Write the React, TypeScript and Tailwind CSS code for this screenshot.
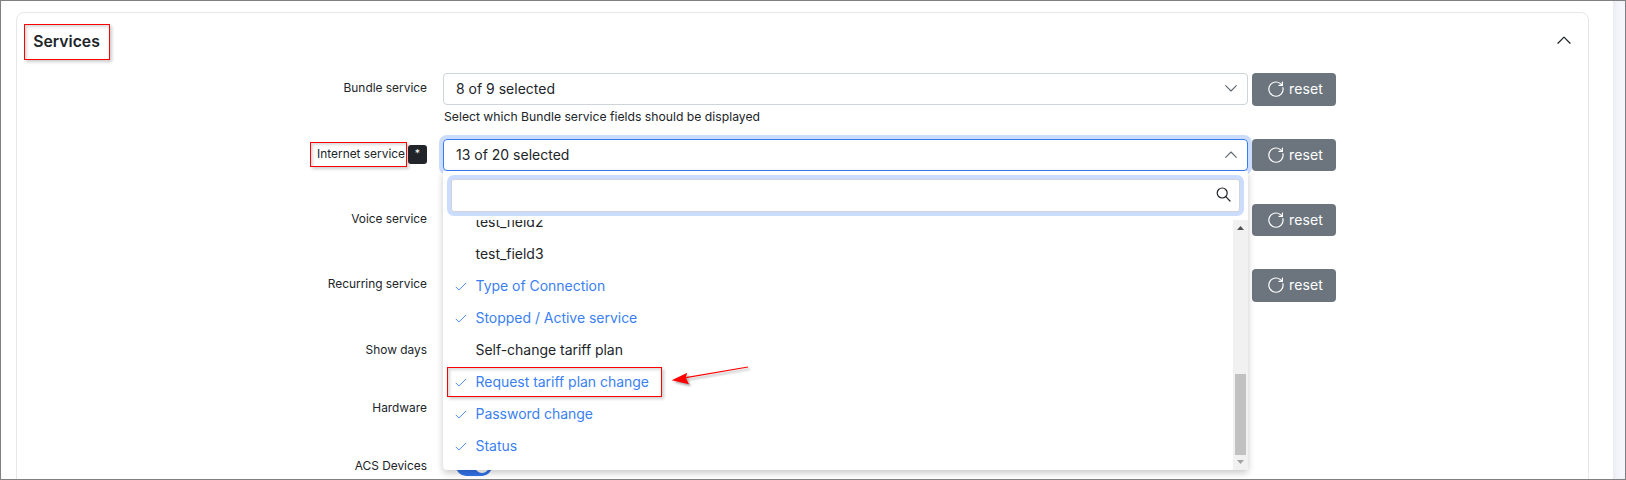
import React from "react";

type IconProps = { className?: string };

const Chevron = ({ className = "" }: IconProps) => (
  <svg viewBox="0 0 12 7" fill="none" stroke="currentColor" strokeLinecap="round" strokeLinejoin="round" className={className}>
    <path d="M0.7 0.7 6 6 11.3 0.7" strokeWidth="1.1" />
  </svg>
);

const ResetIcon = () => (
  <svg viewBox="0 0 16 16" fill="none" stroke="currentColor" strokeWidth="1.2" strokeLinecap="round" strokeLinejoin="round" className="size-4 shrink-0">
    <path d="M14.9 6.6A7.1 7.1 0 1 1 12.4 2.6L14.2 4.2" />
    <path d="M14.4 1v3.4H11" />
  </svg>
);

const Check = () => (
  <svg viewBox="0 0 12 9" fill="none" stroke="currentColor" strokeWidth="0.9" strokeLinecap="round" strokeLinejoin="round" className="mt-0.5 h-[9px] w-3">
    <path d="M1 5.1 3.9 8 11 1" />
  </svg>
);

const SearchIcon = () => (
  <svg viewBox="0 0 15 15" fill="none" stroke="currentColor" strokeWidth="1.2" strokeLinecap="round" className="mb-0.5 size-[15px]">
    <circle cx="6.2" cy="6" r="5" />
    <path d="M9.8 9.7 14 14" />
  </svg>
);

const ResetButton = ({ tall }: { tall?: boolean }) => (
  <button className={`ml-1 flex w-[84px] shrink-0 items-center rounded bg-[#6c757d] pl-4 text-[14px] text-white ${tall ? "h-[33px] pb-px" : "h-8"}`}>
    <ResetIcon />
    <span className="ml-[5px] pb-px tracking-[0.01em]">reset</span>
  </button>
);

const Row = ({ label, height, badge, children }: { label: string; height: string; badge?: boolean; children?: React.ReactNode }) => (
  <div className={`flex ${height}`}>
    <div className="mr-4 flex h-[30px] w-[410px] shrink-0 items-center justify-end text-[11.9px]">
      {badge ? (
        <>
          <span className="mt-px flex h-[25px] w-[97px] items-center justify-end border border-[#f00] pr-px pb-px shadow-[2px_2px_3px_rgba(0,0,0,0.2),inset_2px_2px_3px_rgba(0,0,0,0.15)]">{label}</span>
          <span className="mt-px ml-px flex h-[19px] w-[19px] justify-center rounded-[3px] bg-[#212529] pt-px text-[10.5px] text-white">*</span>
        </>
      ) : (
        label
      )}
    </div>
    {children}
  </div>
);

const options = [
  { name: "test_field2", on: false },
  { name: "test_field3", on: false },
  { name: "Type of Connection", on: true },
  { name: "Stopped / Active service", on: true },
  { name: "Self-change tariff plan", on: false },
  { name: "Request tariff plan change", on: true, marked: true },
  { name: "Password change", on: true },
  { name: "Status", on: true },
];

const Dropdown = () => (
  <div className="absolute top-8 left-0 z-10 flex h-[299px] w-[805px] flex-col rounded-b bg-white shadow-[0_3px_7px_rgba(0,0,0,0.22)]">
    <div className="mx-2 mt-2 flex h-[33px] shrink-0 items-center justify-end rounded-[3px] border border-[#ced4da] bg-white pr-2 shadow-[0_0_0_4px_#cbdcfc]">
      <SearchIcon />
    </div>
    <div className="mt-2 flex h-[250px] overflow-hidden">
      <div className="-mt-[14px] flex-1">
        {options.map((o) => (
          <div key={o.name} className={`relative flex h-8 items-center pb-px pl-3 text-[14px] leading-[21px] tracking-[-0.002em] ${o.on ? "text-[#3b7ff2]" : "text-[#212529]"}`}>
            <span className="w-[20.5px]">{o.on && <Check />}</span>
            <span>{o.name}</span>
            {o.marked && (
              <>
                <span className="absolute top-px left-1 h-[30px] w-[215px] border border-[#f00] shadow-[2px_2px_3px_rgba(0,0,0,0.2),inset_2px_2px_3px_rgba(0,0,0,0.15)]" />
                <svg viewBox="0 0 84 24" className="absolute -top-0.5 left-[226px] h-6 w-[84px] drop-shadow-[2px_2px_1px_rgba(0,0,0,0.35)]">
                  <path d="M14 14.2 79 3" stroke="#f00" strokeWidth="1.2" />
                  <path d="M2.7 16.3 18.3 8.7 16.7 13.8 20 20.3Z" fill="#f00" />
                </svg>
              </>
            )}
          </div>
        ))}
      </div>
      <div className="flex w-[15px] flex-col items-center bg-[#f1f1f1]">
        <svg viewBox="0 0 15 15" className="size-[15px]"><path d="M4 10 7.5 6 11 10Z" fill="#505050" /></svg>
        <div className="mt-[139px] h-[81px] w-[11px] bg-[#c1c1c1]" />
        <svg viewBox="0 0 15 15" className="size-[15px]"><path d="M4 5 7.5 9 11 5Z" fill="#a3a3a3" /></svg>
      </div>
    </div>
  </div>
);

export default function App() {
  return (
    <div className="flex h-[480px] w-[1626px] overflow-hidden border border-[#808080] bg-white font-['Inter',sans-serif] text-[#212529]">
      <main className="w-[1612px] shrink-0 pt-[11px] pl-[15px]">
        <section className="h-[520px] w-[1573px] rounded-lg border border-[#e5e7eb]">
          <header className="flex h-[60px] items-start justify-between pt-[11px] pr-[17px] pl-[7px]">
            <h2 className="flex h-9 w-[86px] items-center justify-center border border-[#f00] pr-px text-[15.75px] font-semibold shadow-[2px_2px_3px_rgba(0,0,0,0.2),inset_2px_2px_3px_rgba(0,0,0,0.15)]">Services</h2>
            <Chevron className="mt-3 h-2 w-3.5 rotate-180" />
          </header>

          <Row label="Bundle service" height="h-[66px]">
            <div className="w-[805px]">
              <div className="flex h-8 items-center justify-between rounded border border-[#ced4da] pr-2.5 pb-px pl-3 text-[14px]">
                8 of 9 selected
                <Chevron className="h-[7px] w-3 text-[#5f6870]" />
              </div>
              <p className="mt-[3px] pl-px text-[12.2px] leading-[18px]">Select which Bundle service fields should be displayed</p>
            </div>
            <ResetButton tall />
          </Row>

          <Row label="Internet service" height="h-[65px]" badge>
            <div className="relative w-[805px]">
              <div className="flex h-8 items-center justify-between rounded border border-[#357bf2] pr-2.5 pb-px pl-3 text-[14px] shadow-[0_0_0_4px_#cbdcfc]">
                13 of 20 selected
                <Chevron className="h-[7px] w-3 rotate-180 text-[#5f6870]" />
              </div>
              <Dropdown />
            </div>
            <ResetButton />
          </Row>

          <Row label="Voice service" height="h-[65px]">
            <div className="h-8 w-[805px] rounded border border-[#ced4da]" />
            <ResetButton />
          </Row>
          <Row label="Recurring service" height="h-[66px]">
            <div className="h-8 w-[805px] rounded border border-[#ced4da]" />
            <ResetButton tall />
          </Row>
          <Row label="Show days" height="h-[58px]" />
          <Row label="Hardware" height="h-[58px]" />
          <Row label="ACS Devices" height="h-[58px]">
            <div className="mt-[5px] ml-[13px] flex h-5 w-9 items-center justify-end rounded-full bg-[#3173e8] pr-[3px]">
              <span className="size-3.5 rounded-full bg-white" />
            </div>
          </Row>
        </section>
      </main>
      <aside className="flex-1 bg-[#f4f6fb] shadow-[inset_3px_0_4px_rgba(0,0,0,0.04)]" />
    </div>
  );
}
